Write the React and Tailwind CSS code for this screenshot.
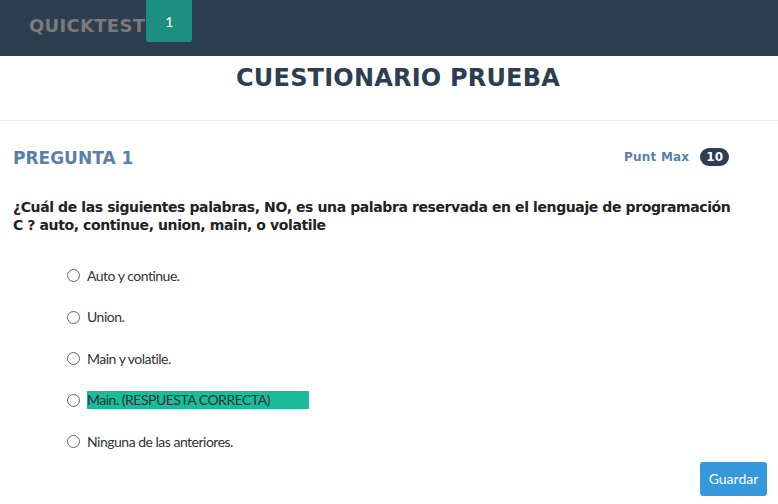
import React from 'react';

const heading = { fontFamily: '"DejaVu Sans", "Open Sans", sans-serif' };

const options = [
  { text: 'Auto y continue.' },
  { text: 'Union.' },
  { text: 'Main y volatile.' },
  { text: 'Main. (RESPUESTA CORRECTA)', correct: true },
  { text: 'Ninguna de las anteriores.' },
];

const App = () => {
  return (
    <div className="w-[778px] h-[504px] bg-white overflow-hidden">
      <header className="h-[56px] bg-[#2c3e50] flex items-start pl-[29px]">
        <span
          className="mt-[12px] text-[18px] font-bold text-[#7a7a7a] tracking-[0.3px]"
          style={heading}
        >
          QUICKTEST
        </span>
        <span
          className="ml-[1px] w-[46px] h-[42px] bg-[#1d8f80] rounded-b-[3px] flex items-center justify-center text-white text-[14px]"
          style={{ fontFamily: '"Lato", sans-serif' }}
        >
          1
        </span>
      </header>

      <div className="h-[65px] border-b border-[#eeeeee] flex justify-center pt-[4px] pl-[18px]">
        <h1 className="text-[24px] font-bold text-[#2c3e50] tracking-[0.2px]" style={heading}>
          CUESTIONARIO PRUEBA
        </h1>
      </div>

      <div className="px-[13px]">
        <div className="flex items-center justify-between mt-[25px] pr-[36px]">
          <h2 className="text-[17px] font-bold text-[#5a7fa8] tracking-[0px]" style={heading}>
            PREGUNTA 1
          </h2>
          <div className="flex items-center gap-[11px] -mt-[4px]">
            <span className="text-[12px] font-bold text-[#5a7fa8] tracking-[0.2px]" style={heading}>
              Punt Max
            </span>
            <span
              className="h-[18px] px-[6px] rounded-full bg-[#2c3e50] text-white text-[12px] font-bold flex items-center"
              style={heading}
            >
              10
            </span>
          </div>
        </div>

        <p
          className="mt-[26px] text-[14px] leading-[18px] font-bold text-[#222222] tracking-[-0.4px] w-[725px]"
          style={heading}
        >
          ¿Cuál de las siguientes palabras, NO, es una palabra reservada en el lenguaje de programación
          C ? auto, continue, union, main, o volatile
        </p>

        <ul className="mt-[33px] pl-[54px] flex flex-col gap-[23.5px]" style={{ fontFamily: '"Lato", sans-serif' }}>
          {options.map((o) => (
            <li key={o.text} className="flex items-center h-[18px]">
              <span className="w-[13px] h-[13px] rounded-full border border-[#666] bg-white shrink-0" />
              <span
                className={`ml-[7px] text-[14px] text-[#333] leading-[18px] tracking-[-0.5px] ${
                  o.correct ? 'bg-[#1abc9c] w-[222px]' : ''
                }`}
              >
                {o.text}
              </span>
            </li>
          ))}
        </ul>

        <div className="flex justify-end mt-[11px]">
          <button
            className="w-[67px] h-[34px] -mr-[2px] bg-[#3498db] text-white text-[14px] rounded-[3px]"
            style={{ fontFamily: '"Lato", sans-serif' }}
          >
            Guardar
          </button>
        </div>
      </div>
    </div>
  );
};

export default App;
